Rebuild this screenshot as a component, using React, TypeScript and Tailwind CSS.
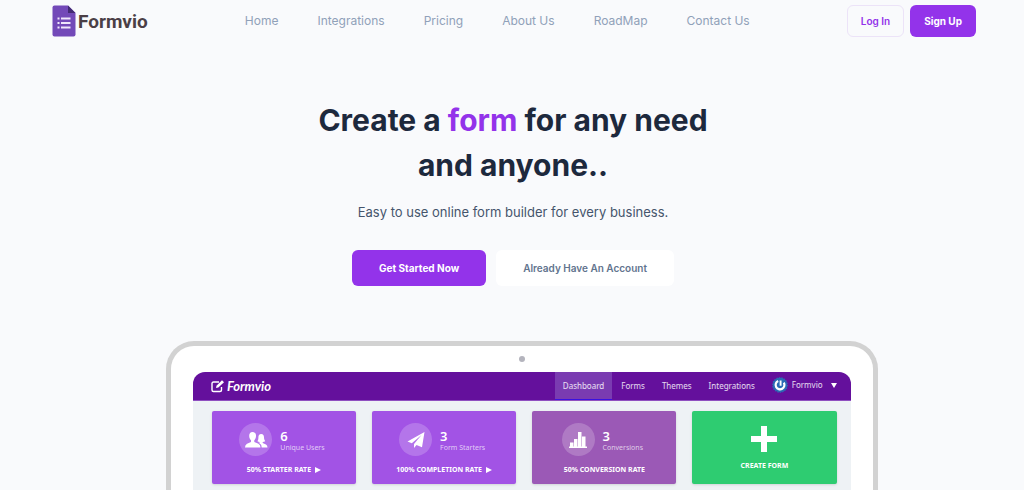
import type { ReactNode } from "react";

const navLinks = ["Home", "Integrations", "Pricing", "About Us", "RoadMap", "Contact Us"];

function Logo() {
  return (
    <a href="#" className="flex items-center gap-0.5" aria-label="Formvio">
      <svg viewBox="0 0 24 32" className="h-8 w-6" aria-hidden="true">
        <path d="M2.500 0.500H16L23.500 8V29.500Q23.500 31.500 21.500 31.500H2.500Q.5 31.500 .5 29.500V2.500Q.5 .5 2.500 .5Z" fill="#7349b8" />
        <path d="M16 .5L23.500 8H16Z" fill="#432a73" />
        <path d="M5.500 12.500h2v2h-2zM9 12.500h9.500v2H9zM5.500 17h2v2h-2zM9 17h9.500v2H9zM5.500 21.500h2v2h-2zM9 21.500h9.500v2H9z" fill="#efe6fb" />
      </svg>
      <span className="pt-0.5 font-['Roboto',sans-serif] text-[19px] leading-6 font-bold text-[#4b3f46]">Formvio</span>
    </a>
  );
}

function UsersIcon() {
  return (
    <svg viewBox="0 0 24 18" className="w-6" fill="#fff" aria-hidden="true">
      <path d="M8.500 1C11 1 12.200 2.800 12 5.200C11.900 7 11.200 8.300 10.300 9.200V11L14.500 12.800Q16.500 13.700 16.500 16.500H1Q1 13.700 3 12.800L7 11V9.200C6 8.300 5.300 7 5.200 5.200C5 2.800 6.200 1 8.500 1Z" />
      <path d="M17.200 3C19.200 3 20 4.500 20 6.500C20 8.500 20.800 9.200 21.200 10.200Q20 11 18.700 11V12L22 13.500Q23.500 14.300 23.500 16.500H17.700Q17.700 13.500 15.800 12.500L14.500 11.800L15.800 11.500V11Q14.200 10.900 13.400 10.200C14 9.200 14.400 8.500 14.400 6.500C14.400 4.500 15.200 3 17.200 3Z" />
    </svg>
  );
}

function PlaneIcon() {
  return (
    <svg viewBox="0 0 18 18" className="w-[18px]" fill="#fff" aria-hidden="true">
      <path d="M17.500 1L.5 10.500L4.800 12.200L14.500 4L7 13V17L9.500 14L15 16.200Z" />
    </svg>
  );
}

function BarsIcon() {
  return (
    <svg viewBox="0 0 20 18" className="w-5" fill="#fff" aria-hidden="true">
      <path d="M1 15.500H2V11.500H5.500V15.500H6V8H9.500V15.500H10V1H13.500V15.500H14V5.500H17.500V15.500H19V17H1Z" />
    </svg>
  );
}

type StatProps = { icon: ReactNode; value: string; label: string; rate: string; arrow?: boolean; color: string };

function StatCard({ icon, value, label, rate, arrow, color }: StatProps) {
  return (
    <div className={`flex flex-col items-center gap-2 rounded-xs pt-3 pb-2 text-white shadow-sm ${color}`}>
      <div className="flex items-center gap-2 pr-1">
        <span className="flex size-[33px] items-center justify-center rounded-full bg-white/20">{icon}</span>
        <div className="pt-1">
          <div className="text-[13px] leading-3 font-semibold">{value}</div>
          <div className="text-[7px] leading-3 text-white/70">{label}</div>
        </div>
      </div>
      <div className="flex items-center gap-1 text-[7px] leading-3 font-bold">
        {rate}
        {arrow && (
          <svg viewBox="0 0 6 6" className="size-1.5" aria-hidden="true">
            <path d="M0 0L6 3L0 6Z" fill="#fff" />
          </svg>
        )}
      </div>
    </div>
  );
}

function Dashboard() {
  return (
    <div className="overflow-hidden rounded-t-xl bg-[#eef2f5] font-['Noto_Sans',sans-serif]">
      <div className="flex h-[29px] items-stretch justify-between border-b border-[#8f4fc0] bg-[#64109c] pr-3.5 pl-[18px] text-[8px] text-white/85">
        <div className="flex items-center gap-0.5 text-white">
          <svg viewBox="0 0 14 14" className="size-3.5" fill="none" stroke="currentColor" aria-hidden="true">
            <path d="M8 3H2.500Q1 3 1 4.500V11Q1 12.500 2.500 12.500H9Q10.500 12.500 10.500 11V8" strokeWidth="1.400" />
            <path d="M5 9L5.500 6.800L11 1.200L13 3.200L7.300 8.600Z" fill="currentColor" stroke="none" />
          </svg>
          <span className="font-['Lato',sans-serif] text-[13px] leading-4 font-bold italic">Formvio</span>
        </div>
        <div className="flex items-stretch gap-px">
          <a href="#" className="flex items-center border-b border-[#3a10e0] bg-[#7a3bb1] px-2">Dashboard</a>
          <a href="#" className="flex items-center px-2">Forms</a>
          <a href="#" className="flex items-center px-2">Themes</a>
          <a href="#" className="flex items-center px-2">Integrations</a>
          <button type="button" className="flex items-center gap-1 pb-0.5 pl-2">
            <svg viewBox="0 0 16 16" className="size-4" aria-hidden="true">
              <circle cx="8" cy="8" r="7.200" fill="#2b6cb5" stroke="#2b6cb5" strokeWidth="1.300" strokeDasharray="1.500 1" />
              <path d="M6.200 3.900A4.400 4.400 0 1 0 11.800 5.600" fill="none" stroke="#fff" strokeWidth="2.200" />
              <path d="M8.600 3.500V8.800" stroke="#fff" strokeWidth="1.900" />
            </svg>
            Formvio
            <svg viewBox="0 0 6 5" className="ml-1 h-[5px] w-1.5" aria-hidden="true">
              <path d="M0 0H6L3 5Z" fill="#fff" />
            </svg>
          </button>
        </div>
      </div>
      <div className="grid grid-cols-4 gap-4 pt-2.5 pr-3.5 pb-48 pl-[19px]">
        <StatCard color="bg-[#a253e5]" icon={<UsersIcon />} value="6" label="Unique Users" rate="50% STARTER RATE" arrow />
        <StatCard color="bg-[#a253e5]" icon={<PlaneIcon />} value="3" label="Form Starters" rate="100% COMPLETION RATE" arrow />
        <StatCard color="bg-[#9b59b6]" icon={<BarsIcon />} value="3" label="Conversions" rate="50% CONVERSION RATE" />
        <button type="button" className="flex flex-col items-center gap-2 rounded-xs bg-[#2ecc71] pt-[15px] text-[7px] leading-3 font-bold text-white shadow-sm">
          <svg viewBox="0 0 26 26" className="size-[26px]" aria-hidden="true">
            <path d="M10 0H16V10H26V16H16V26H10V16H0V10H10Z" fill="#fff" />
          </svg>
          CREATE FORM
        </button>
      </div>
    </div>
  );
}

export default function App() {
  return (
    <div className="h-screen overflow-hidden bg-[#f9fafc] font-['Inter',sans-serif]">
      <header className="flex items-center justify-between pt-[5px] pr-12 pl-[52px]">
        <Logo />
        <nav className="flex gap-[39px] text-xs text-slate-400">
          {navLinks.map((link) => (
            <a key={link} href="#">{link}</a>
          ))}
        </nav>
        <div className="flex gap-1.5 text-[10px] leading-3 font-semibold">
          <button type="button" className="rounded-md border border-[#ece3f8] px-[13px] py-[9px] text-[#9333ea]">Log In</button>
          <button type="button" className="rounded-md bg-[#9333ea] px-3.5 py-[9px] font-bold text-white">Sign Up</button>
        </div>
      </header>
      <main>
        <section className="flex flex-col items-center pt-[61px] pl-0.5 text-center">
          <h1 className="max-w-[440px] text-[30px] leading-[45px] font-bold text-slate-800">
            Create a <span className="text-[#9333ea]">form</span> for any need and anyone..
          </h1>
          <p className="mt-3 text-[13px] leading-6 text-slate-600">Easy to use online form builder for every business.</p>
          <div className="mt-[26px] flex gap-2.5 text-[10px] leading-3 font-semibold">
            <button type="button" className="rounded-md bg-[#9333ea] px-[27px] py-3 font-bold text-white">Get Started Now</button>
            <button type="button" className="rounded-md bg-white px-[27px] py-3 text-slate-500">Already Have An Account</button>
          </div>
        </section>
        <section className="mt-[55px] ml-[16.2%] w-[69.5%] rounded-t-[28px] border-[5px] border-b-0 border-[#d2d2d2] bg-white px-[22px] pt-2.5">
          <div className="mx-auto mb-2.5 size-1.5 rounded-full bg-[#b4b4bd]" />
          <Dashboard />
        </section>
      </main>
    </div>
  );
}
